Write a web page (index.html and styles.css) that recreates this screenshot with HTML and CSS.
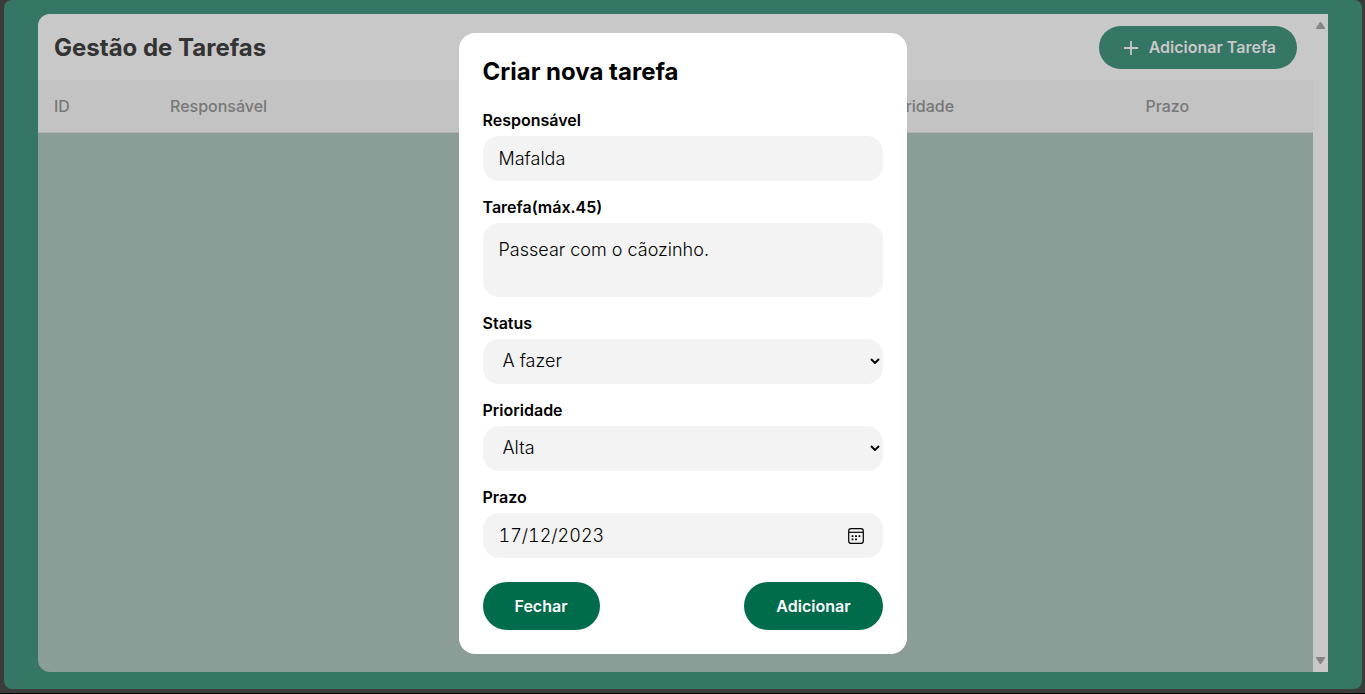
FILE: index.html
```html
<!DOCTYPE html>
<html lang="pt">
<head>
<meta charset="utf-8">
<title>Gestão de Tarefas</title>
<meta name="viewport" content="width=device-width, initial-scale=1">
<link rel="stylesheet" href="styles.css">
</head>
<body>
<div class="window">
  <main class="page">
    <section class="panel">
      <div class="panel-content">
        <header class="panel-header">
          <h1 class="panel-title">Gestão de Tarefas</h1>
          <button class="add-button" type="button">
            <svg class="add-icon" viewBox="0 0 14 14" aria-hidden="true"><path d="M7 0v14M0 7h14"/></svg>
            Adicionar Tarefa
          </button>
        </header>
        <table class="tasks">
          <thead>
            <tr>
              <th class="col-id">ID</th>
              <th class="col-owner">Responsável</th>
              <th class="col-task">Tarefa</th>
              <th class="col-status">Status</th>
              <th class="col-priority">Prioridade</th>
              <th>Prazo</th>
            </tr>
          </thead>
        </table>
      </div>
      <div class="scrollbar" aria-hidden="true">
        <svg class="scroll-arrow" viewBox="0 0 9 7"><path d="M4 0h1l4 6v1H0V6z"/></svg>
        <svg class="scroll-arrow" viewBox="0 0 9 7"><path d="M0 0h9v1L5 7H4L0 1z"/></svg>
      </div>
    </section>
  </main>
</div>

<div class="overlay">
  <dialog class="modal" open aria-labelledby="modal-title">
    <form class="form">
      <h2 class="modal-title" id="modal-title">Criar nova tarefa</h2>
      <div class="fields">
        <div class="field">
          <label class="label" for="owner">Responsável</label>
          <input class="control" id="owner" type="text" value="Mafalda">
        </div>
        <div class="field">
          <label class="label" for="task">Tarefa(máx.45)</label>
          <textarea class="control control-area" id="task" maxlength="45" spellcheck="false">Passear com o cãozinho.</textarea>
        </div>
        <div class="field">
          <label class="label" for="status">Status</label>
          <div class="control-wrap">
            <select class="control control-select" id="status"><option>A fazer</option></select>
            <svg class="chevron" viewBox="0 0 10 6" aria-hidden="true"><path d="M1 1l4 4 4-4"/></svg>
          </div>
        </div>
        <div class="field">
          <label class="label" for="priority">Prioridade</label>
          <div class="control-wrap">
            <select class="control control-select" id="priority"><option>Alta</option></select>
            <svg class="chevron" viewBox="0 0 10 6" aria-hidden="true"><path d="M1 1l4 4 4-4"/></svg>
          </div>
        </div>
        <div class="field">
          <label class="label" for="due">Prazo</label>
          <div class="control-wrap">
            <input class="control control-date" id="due" type="text" value="17/12/2023">
            <button class="calendar" type="button" aria-label="Abrir calendário">
              <svg class="calendar-icon" viewBox="0 0 16 16" aria-hidden="true">
                <rect class="calendar-line" x=".7" y=".7" width="14.6" height="14.6" rx="2.3"/>
                <path class="calendar-line" d="M1 4.3h14"/>
                <path d="M3.6 7.2h1.8V9H3.6zM7.1 7.2h1.8V9H7.1zM10.6 7.2h1.8V9h-1.8zM3.6 10.4h1.8v1.8H3.6zM7.1 10.4h1.8v1.8H7.1z"/>
              </svg>
            </button>
          </div>
        </div>
      </div>
      <div class="actions">
        <button class="action" type="button">Fechar</button>
        <button class="action" type="button">Adicionar</button>
      </div>
    </form>
  </dialog>
</div>
</body>
</html>
```
FILE: styles.css
```css
* {
  box-sizing: border-box;
}

body {
  margin: 0;
  background: #3b3b3b;
  font-family: Inter, "Liberation Sans", sans-serif;
  font-size: 16px;
}

button,
input,
select,
textarea {
  font-family: inherit;
}

.window {
  display: flex;
  min-height: 100vh;
  padding: 0 3px 4px 4px;
  border-bottom: 1px solid #000;
}

.page {
  display: flex;
  flex: 1;
  padding: 14px 34px 17px;
  border-radius: 8px;
  background: #367664;
}

.panel {
  display: flex;
  flex: 1;
  overflow: hidden;
  border-radius: 12px 0 0 12px;
  background: #8a9d97;
}

.panel-content {
  flex: 1;
}

.panel-header {
  display: flex;
  align-items: center;
  justify-content: space-between;
  padding: 12px 16px 11px;
  background: #c8c8c8;
}

.panel-title {
  margin: 0;
  color: #333;
  font-size: 24px;
  font-weight: 700;
  line-height: 29px;
}

.add-button {
  display: flex;
  align-items: center;
  gap: 11px;
  padding: 12px 21px 12px 25px;
  border: 0;
  border-radius: 24px;
  background: #367664;
  color: #c8c8c8;
  font-size: 16px;
  font-weight: 600;
  line-height: 19px;
}

.add-icon {
  width: 14px;
  height: 14px;
  fill: none;
  stroke: #c8c8c8;
  stroke-width: 1.8;
}

.tasks {
  width: 100%;
  table-layout: fixed;
  border-collapse: collapse;
}

.tasks th {
  padding: 16px;
  border-bottom: 1px solid #b0b0b0;
  background: #c3c3c3;
  color: #777;
  font-weight: 500;
  line-height: 20px;
  text-align: left;
}

.col-id {
  width: 9.1%;
}

.col-owner {
  width: 33%;
}

.col-task {
  width: 10%;
}

.col-status {
  width: 12.3%;
}

.col-priority {
  width: 21.2%;
}

.scrollbar {
  display: flex;
  flex-direction: column;
  align-items: center;
  justify-content: space-between;
  width: 15px;
  padding: 8px 0;
  background: #c8c8c8;
}

.scroll-arrow {
  width: 9px;
  height: 7px;
  fill: #858585;
}

.overlay {
  position: fixed;
  inset: 0;
  display: flex;
  align-items: center;
  justify-content: center;
  padding-bottom: 8px;
}

.modal {
  position: static;
  width: 448px;
  max-width: 100%;
  margin: 0;
  padding: 24px;
  border: 0;
  border-radius: 16px;
  background: #fff;
  color: #000;
}

.form {
  display: flex;
  flex-direction: column;
  gap: 24px;
}

.modal-title {
  margin: 0;
  font-size: 24px;
  font-weight: 700;
  line-height: 29px;
}

.fields {
  display: flex;
  flex-direction: column;
  gap: 16px;
}

.field {
  display: flex;
  flex-direction: column;
  gap: 6px;
}

.label {
  font-weight: 600;
  line-height: 20px;
}

.control {
  display: block;
  width: 100%;
  height: 45px;
  padding: 0 16px;
  border: 0;
  border-radius: 16px;
  background: #f3f3f3;
  color: #000;
  font-size: 18px;
  font-weight: 300;
  line-height: 22px;
}

.control-area {
  height: 74px;
  padding: 16px;
  resize: none;
}

.control-select {
  padding: 0 20px;
  appearance: none;
}

.control-date {
  font-variant-numeric: tabular-nums;
}

.control-wrap {
  position: relative;
}

.chevron {
  position: absolute;
  top: 19px;
  right: 3px;
  width: 10px;
  height: 6px;
  fill: none;
  stroke: #000;
  stroke-width: 2;
  pointer-events: none;
}

.calendar {
  position: absolute;
  top: 15px;
  right: 19px;
  padding: 0;
  border: 0;
  background: none;
}

.calendar-icon {
  display: block;
  width: 16px;
  height: 16px;
}

.calendar-line {
  fill: none;
  stroke: #000;
  stroke-width: 1.2;
}

.actions {
  display: flex;
  justify-content: space-between;
}

.action {
  height: 48px;
  padding: 0 32px;
  border: 0;
  border-radius: 24px;
  background: #006c4c;
  color: #fff;
  font-size: 16px;
  font-weight: 600;
}
```
